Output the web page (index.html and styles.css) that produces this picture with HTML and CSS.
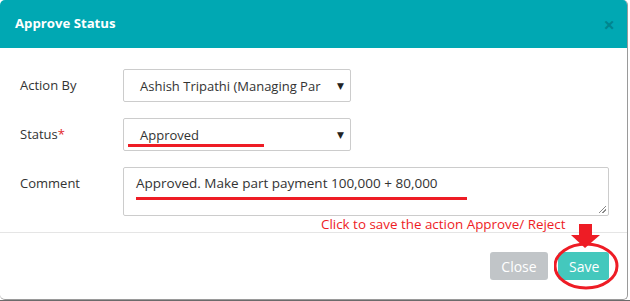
FILE: index.html
```html
<!DOCTYPE html>
<html>
<head>
<meta charset="utf-8">
<link rel="stylesheet" href="styles.css">
</head>
<body>
<div class="modal">
  <div class="modal-header">
    <h4 class="modal-title">Approve Status</h4>
    <span class="close">&times;</span>
  </div>
  <div class="modal-body">
    <div class="form-row">
      <label class="label">Action By</label>
      <div class="select select-wide"><span>Ashish Tripathi (Managing Par</span><span class="caret">&#9660;</span></div>
    </div>
    <div class="form-row">
      <label class="label">Status<span class="req">*</span></label>
      <div class="select select-wide"><span>Approved</span><span class="caret">&#9660;</span></div>
    </div>
    <div class="form-row">
      <label class="label">Comment</label>
      <div class="textarea">Approved. Make part payment 100,000 + 80,000<span class="grip"></span></div>
    </div>
  </div>
  <div class="modal-footer">
    <button class="btn btn-close">Close</button>
    <button class="btn btn-save">Save</button>
  </div>

  <div class="mark mark-status"></div>
  <div class="mark mark-comment"></div>
  <div class="hint">Click to save the action Approve/ Reject</div>
  <svg class="annot" width="80" height="80" viewBox="0 0 80 80">
    <rect x="25" y="4" width="13" height="12" fill="#ee1c25"/>
    <polygon points="17,15 46,15 31,28" fill="#ee1c25"/>
    <ellipse cx="32" cy="46" rx="31" ry="22" fill="none" stroke="#ee1c25" stroke-width="3"/>
  </svg>
</div>
<div class="page-edge"></div>
</body>
</html>
```

FILE: styles.css
```css
* { box-sizing: border-box; }
html, body { margin: 0; padding: 0; background: #fff; }
body {
  width: 630px;
  height: 301px;
  overflow: hidden;
  font-family: "Open Sans", "DejaVu Sans", sans-serif;
  font-size: 13px;
  color: #333;
  position: relative;
}
.modal {
  position: relative;
  width: 628px;
  height: 300px;
  background: #fff;
  border-radius: 5px;
  overflow: hidden;
  border-right: 1px solid #9a9a9a;
  border-bottom: 1px solid #9a9a9a;
}
.modal-header {
  height: 48px;
  background: #00a8b3;
  display: flex;
  align-items: center;
  justify-content: space-between;
  padding: 0 15px 0 15px;
}
.modal-title {
  margin: 0;
  color: #fff;
  font-size: 13.2px;
  font-weight: 700;
  position: relative;
  top: -1px;
}
.close {
  color: #000;
  opacity: 0.2;
  font-size: 20px;
  font-weight: 700;
  line-height: 1;
  margin-right: -3px;
  position: relative;
  top: 1px;
}
.modal-body {
  padding: 21px 18px 0 20px;
  display: flex;
  flex-direction: column;
  gap: 16px;
}
.form-row {
  display: grid;
  grid-template-columns: 103px 1fr;
  align-items: start;
}
.label {
  padding-top: 7px;
  line-height: 18px;
}
.req { color: #e2262a; }
.select {
  height: 33px;
  border: 1px solid #ccc;
  border-radius: 2px;
  display: flex;
  align-items: center;
  justify-content: space-between;
  padding: 0 6px 0 16px;
  color: #333;
}
.select-wide { width: 228px; }
.caret { font-size: 9px; color: #222; }
.textarea {
  position: relative;
  height: 49px;
  border: 1px solid #ccc;
  border-radius: 2px;
  padding: 6px 12px;
  font-size: 13.5px;
  line-height: 18px;
  color: #333;
}
.grip {
  position: absolute;
  right: 2px;
  bottom: 2px;
  width: 7px;
  height: 7px;
  background: linear-gradient(135deg, transparent 45%, #888 45%, #888 55%, transparent 55%, transparent 70%, #888 70%, #888 80%, transparent 80%);
}
.modal-footer {
  margin-top: 16px;
  border-top: 1px solid #e5e5e5;
  padding: 19px 18px 0 0;
  display: flex;
  justify-content: flex-end;
  gap: 10px;
}
.btn {
  height: 28px;
  border: none;
  border-radius: 3px;
  color: #fff;
  font-family: "Open Sans", "DejaVu Sans", sans-serif;
  font-size: 14px;
  padding: 0 11px;
}
.btn-close { background: #c1c5c8; width: 58px; }
.btn-save { background: #44c8bd; width: 51px; }

.mark {
  position: absolute;
  height: 3px;
  background: #ee1c25;
}
.mark-status { left: 128px; top: 144px; width: 136px; }
.mark-comment { left: 136px; top: 197px; width: 331px; }
.hint {
  position: absolute;
  left: 321px;
  top: 215px;
  color: #ee1c25;
  font-size: 13.4px;
  line-height: 18px;
}
.annot {
  position: absolute;
  left: 554px;
  top: 220px;
}
.page-edge {
  height: 1px;
  background: #6b6b6b;
}
```
